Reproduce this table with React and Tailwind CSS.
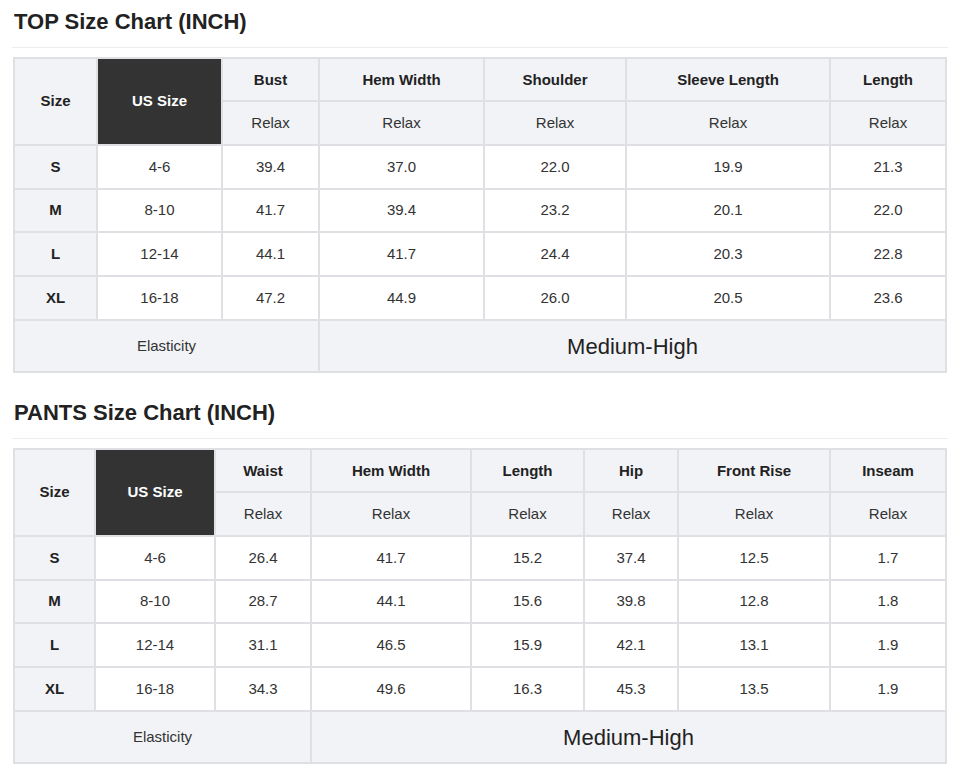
import React from 'react';

const topChart = {
  title: 'TOP Size Chart (INCH)',
  widths: [83, 125, 97, 165, 142, 204, 116],
  measures: ['Bust', 'Hem Width', 'Shoulder', 'Sleeve Length', 'Length'],
  rows: [
    ['S', '4-6', '39.4', '37.0', '22.0', '19.9', '21.3'],
    ['M', '8-10', '41.7', '39.4', '23.2', '20.1', '22.0'],
    ['L', '12-14', '44.1', '41.7', '24.4', '20.3', '22.8'],
    ['XL', '16-18', '47.2', '44.9', '26.0', '20.5', '23.6'],
  ],
};

const pantsChart = {
  title: 'PANTS Size Chart (INCH)',
  widths: [81, 120, 96, 160, 113, 94, 152, 116],
  measures: ['Waist', 'Hem Width', 'Length', 'Hip', 'Front Rise', 'Inseam'],
  rows: [
    ['S', '4-6', '26.4', '41.7', '15.2', '37.4', '12.5', '1.7'],
    ['M', '8-10', '28.7', '44.1', '15.6', '39.8', '12.8', '1.8'],
    ['L', '12-14', '31.1', '46.5', '15.9', '42.1', '13.1', '1.9'],
    ['XL', '16-18', '34.3', '49.6', '16.3', '45.3', '13.5', '1.9'],
  ],
};

const cell = 'border-2 border-[#dfe0e4] text-center align-middle p-0';
// row heights measured from the chart: header, header, S, M, L, XL
const rowHeights = ['h-[43px]', 'h-[44px]', 'h-[44px]', 'h-[43px]', 'h-[44px]', 'h-[44px]'];

const SizeChart = ({ chart }) => {
  const restSpan = chart.widths.length - 3;
  return (
    <section>
      <h2 className="text-[22px] leading-[24px] font-bold text-[#222] pt-[10px] pb-[13px] mx-[-1px] px-[2px] border-b border-[#ececec]">
        {chart.title}
      </h2>
      <table className="table-fixed border-collapse w-[932px] mt-[9px] text-[15px] text-[#333]">
        <colgroup>
          {chart.widths.map((w, i) => (
            <col key={i} style={{ width: w }} />
          ))}
        </colgroup>
        <tbody>
          <tr className={rowHeights[0]}>
            <td rowSpan={2} className={`${cell} bg-[#f2f3f7] font-bold text-[#222]`}>Size</td>
            <td rowSpan={2} className={`${cell} bg-[#333333] border-[#333333] font-bold text-white`}>US Size</td>
            {chart.measures.map((m) => (
              <td key={m} className={`${cell} bg-[#f2f3f7] font-bold text-[#222] pt-px`}>{m}</td>
            ))}
          </tr>
          <tr className={rowHeights[1]}>
            {chart.measures.map((m) => (
              <td key={m} className={`${cell} bg-[#f2f3f7]`}>Relax</td>
            ))}
          </tr>
          {chart.rows.map((row, r) => (
            <tr key={row[0]} className={rowHeights[r + 2]}>
              {row.map((v, i) => (
                <td
                  key={i}
                  className={i === 0 ? `${cell} bg-[#f2f3f7] font-bold text-[#222]` : `${cell} bg-white`}
                >
                  {v}
                </td>
              ))}
            </tr>
          ))}
          <tr className="h-[52px]">
            <td colSpan={3} className={`${cell} bg-[#f2f3f7]`}>Elasticity</td>
            <td colSpan={restSpan} className={`${cell} bg-[#f2f3f7] text-[22px] text-[#222]`}>Medium-High</td>
          </tr>
        </tbody>
      </table>
    </section>
  );
};

const App = () => {
  return (
    <div className="w-[960px] h-[766px] bg-white px-[13px] font-['Liberation_Sans',Arial,sans-serif] overflow-hidden">
      <SizeChart chart={topChart} />
      <div className="h-[18px]" />
      <SizeChart chart={pantsChart} />
    </div>
  );
};

export default App;
